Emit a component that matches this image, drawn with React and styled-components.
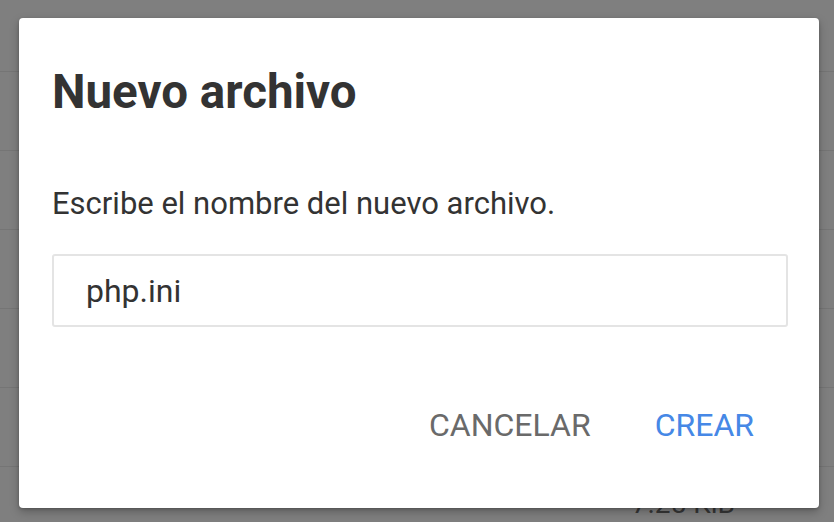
import React from "react";
import styled, { createGlobalStyle } from "styled-components";

const Global = createGlobalStyle`
  html, body { margin: 0; padding: 0; }
  body { width: 834px; height: 522px; overflow: hidden; background: #fff; font-family: Roboto, "Liberation Sans", sans-serif; }
`;

const Page = styled.div`
  position: relative;
  width: 834px;
  height: 522px;
  overflow: hidden;
`;

const FileList = styled.div`
  display: flex;
  flex-direction: column;
  margin-top: -7px;
`;

const FileRow = styled.div`
  height: 79px;
  flex: none;
  box-sizing: border-box;
  border-bottom: 1px solid #ebebeb;
  display: flex;
  align-items: center;
  justify-content: flex-end;
  padding: 0 99px 6px 0;
  font-family: Roboto, sans-serif;
  font-size: 28px;
  line-height: 33px;
  color: #6e6e6e;
`;

const Overlay = styled.div`
  position: absolute;
  inset: 0;
  background: rgba(0, 0, 0, 0.5);
  display: flex;
  align-items: flex-start;
  justify-content: flex-start;
  padding: 18px 0 0 19px;
`;

const Dialog = styled.div`
  width: 800px;
  height: 490px;
  box-sizing: border-box;
  background: #fff;
  border-radius: 4px;
  box-shadow: 0 4px 10px rgba(0, 0, 0, 0.25), 0 1px 3px rgba(0, 0, 0, 0.2);
  padding: 0 33px;
  display: flex;
  flex-direction: column;
`;

const Title = styled.h2`
  margin: 46px 0 0;
  font-family: Roboto, sans-serif;
  font-weight: 700;
  font-size: 47.5px;
  line-height: 56px;
  color: #333;
`;

const Message = styled.p`
  margin: 66px 0 0;
  font-family: Roboto, sans-serif;
  font-size: 31px;
  line-height: 36px;
  color: #333;
`;

const NameInput = styled.input`
  margin-top: 32px;
  box-sizing: border-box;
  width: 736px;
  height: 73px;
  border: 2px solid #e4e4e4;
  border-radius: 3px;
  padding: 0 32px;
  font-family: Roboto, sans-serif;
  font-size: 32px;
  color: #333;
  outline: none;
`;

const Actions = styled.div`
  margin-top: auto;
  margin-bottom: 63px;
  display: flex;
  justify-content: flex-end;
  gap: 32px;
  padding-right: 16px;
`;

const ActionButton = styled.button`
  border: none;
  background: none;
  padding: 0 16px;
  font-family: Roboto, sans-serif;
  font-size: 32px;
  line-height: 40px;
  text-transform: uppercase;
  color: ${(p) => (p.$primary ? "#4688e6" : "#6a6a6a")};
  cursor: pointer;
`;

const rows = ["", "", "", "", "", "", "7.25 KiB"];

export default function App() {
  return (
    <Page>
      <Global />
      <FileList>
        {rows.map((r, i) => (
          <FileRow key={i}>{r}</FileRow>
        ))}
      </FileList>
      <Overlay>
        <Dialog>
          <Title>Nuevo archivo</Title>
          <Message>Escribe el nombre del nuevo archivo.</Message>
          <NameInput defaultValue="php.ini" />
          <Actions>
            <ActionButton>Cancelar</ActionButton>
            <ActionButton $primary>Crear</ActionButton>
          </Actions>
        </Dialog>
      </Overlay>
    </Page>
  );
}
